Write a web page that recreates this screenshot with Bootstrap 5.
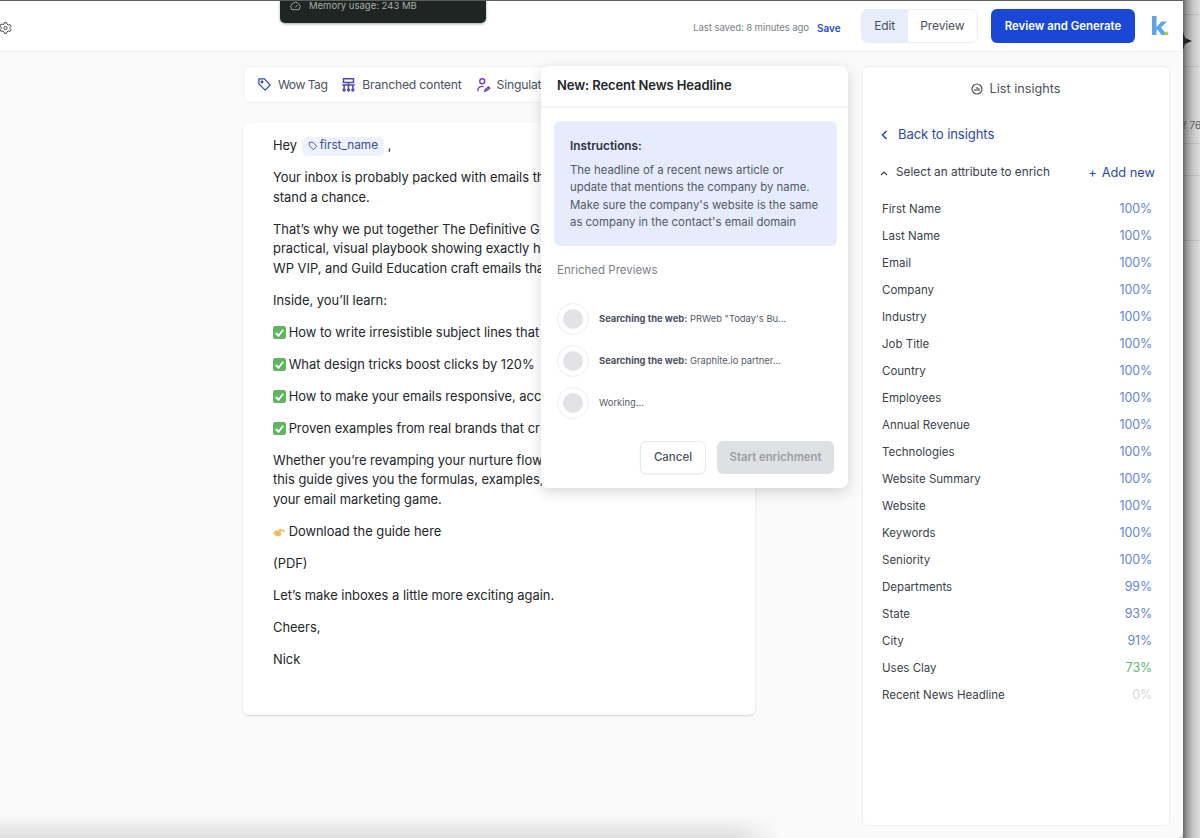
<!DOCTYPE html>
<html lang="en">
<head>
  <meta charset="UTF-8" />
  <meta name="viewport" content="width=device-width, initial-scale=1" />
  <title>Email editor</title>
  <link href="https://cdn.jsdelivr.net/npm/bootstrap@5.3.0/dist/css/bootstrap.min.css" rel="stylesheet">
  <style>
    html, body { height: 100%; overflow: hidden; }
    body {
      background: #d8d8d8;
      font-family: "Inter", "Liberation Sans", sans-serif;
      color: #1c1f26;
    }
    .app-window {
      position: relative;
      width: 1183px;
      height: 838px;
      background: #fafafa;
      border-top: 1px solid #5c5c5c;
      border-bottom-right-radius: 6px;
      overflow: hidden;
    }
    .side-strip {
      position: absolute;
      left: 1183px;
      top: 0;
      width: 17px;
      height: 838px;
      background: linear-gradient(90deg, #6a6a6a 0, #9a9a9a 4px, #c6c6c6 10px, #dedede 17px);
      overflow: hidden;
      font-size: 10px;
      color: #555;
    }
    .side-strip .strip-text { position: absolute; left: 0; top: 118px; white-space: nowrap; }
    .strip-line { position: absolute; left: 0; right: 0; height: 1px; background: rgba(0,0,0,.09); }
    .strip-line:nth-child(1) { top: 14px; }
    .strip-line:nth-child(2) { top: 66px; }
    .strip-line:nth-child(3) { top: 143px; }
    .strip-line:nth-child(4) { top: 175px; }
    .strip-line:nth-child(5) { top: 240px; }
    .side-arrow { position: absolute; left: 0; top: 32px; }
    .top-bar {
      height: 51px;
      background: #fff;
      border-bottom: 1px solid #efefef;
      padding-right: 14px;
    }
    .gear-icon { left: -1px; top: 20px; }
    .saved-text { font-size: 9.6px; letter-spacing: -.1px; color: #7b7f88; margin-right: 8px; margin-top: 4px; }
    .save-link { font-size: 10px; font-weight: 600; color: #1d4ed8; text-decoration: none; margin-right: 20px; margin-top: 4px; }
    .mode-switch { border: 1px solid #ebedf0; border-radius: 6px; overflow: hidden; height: 34px; background: #fff; }
    .mode-switch span { display: flex; align-items: center; font-size: 12px; letter-spacing: -.1px; color: #4b5160; padding: 0 12.5px; }
    .mode-switch .mode-on { background: #e7edfb; }
    .btn-generate {
      background: #1a48d4;
      color: #fff;
      font-size: 11.4px;
      font-weight: 600;
      border: 0;
      border-radius: 6px;
      height: 34px;
      width: 144px;
      margin-left: 13px;
      padding: 1px 0 0;
    }
    .brand-k { margin-left: 16px; }
    .mem-tip {
      position: absolute;
      left: 280px;
      top: -1px;
      width: 206px;
      height: 23px;
      background: #1e2522;
      border-radius: 0 0 5px 5px;
      color: #a9aeab;
      font-size: 9.5px;
      padding: 0 0 11px 10px;
      z-index: 5;
      box-shadow: 0 1px 3px rgba(0,0,0,.35);
    }
    .work-area { padding: 14px 0 0 243px; }
    .editor-col { width: 512px; }
    .tool-strip {
      height: 37px;
      background: #fff;
      border: 1px solid #f1f1f1;
      border-radius: 6px;
      padding: 1px 0 0 13px;
      font-size: 12.2px;
      color: #4b5160;
      white-space: nowrap;
      overflow: hidden;
      letter-spacing: -.2px;
      gap: 14px;
    }
    .tool-item { gap: 6px; }
    .tool-tight { letter-spacing: -.55px; }
    .mail-card {
      margin-top: 20px;
      height: 592px;
      background: #fff;
      border-radius: 6px;
      box-shadow: 0 1px 2px rgba(0,0,0,.16);
      padding: 13px 30px 0;
      font-size: 12.9px;
      line-height: 19.5px;
      color: #23262b;
    }
    .mail-card p { margin: 0 0 12.5px; white-space: nowrap; }
    .mail-card svg { vertical-align: -2px; margin-right: -1px; }
    .name-chip {
      display: inline-flex;
      align-items: center;
      gap: 2px;
      background: #eef2fc;
      color: #3b4f96;
      border-radius: 5px;
      font-size: 11.8px;
      height: 19px;
      padding: 0 6px;
      margin-left: 1px;
      vertical-align: -1px;
    }
    .name-chip svg { vertical-align: 0; margin: 0; }
    .pop-panel {
      position: absolute;
      left: 541px;
      top: 65px;
      width: 307px;
      height: 422px;
      background: #fff;
      border-radius: 7px;
      box-shadow: 0 4px 14px rgba(0,0,0,.16);
      z-index: 4;
    }
    .pop-title { height: 42px; padding: 10px 16px 0; font-size: 13px; font-weight: 600; color: #23262b; border-bottom: 2px solid #f3f3f4; letter-spacing: -.1px; }
    .instr-box {
      margin: 13px 11px 0 13px;
      height: 125px;
      background: #e6ecfb;
      border-radius: 6px;
      padding: 17px 16px 0;
      font-size: 11.4px;
      line-height: 17.4px;
      color: #525866;
      white-space: nowrap;
    }
    .instr-box strong { display: block; color: #2d3340; font-weight: 600; font-size: 11.8px; margin-bottom: 7px; line-height: 17px; }
    .enrich-head { font-size: 11.5px; color: #7b7f88; margin: 16px 0 0 16px; height: 36px; }
    .step-list { padding: 0 0 0 16px; }
    .step-row { height: 42px; gap: 10px; font-size: 9.4px; color: #565c69; }
    .step-row b { font-weight: 700; color: #4b5160; }
    .step-ring { width: 32px; height: 32px; border: 1px solid #eeeeef; border-radius: 50%; flex: none; }
    .step-ring i { display: block; width: 20px; height: 20px; background: #e2e3e6; border-radius: 50%; }
    .pop-foot { margin-top: 17px; padding-right: 14px; gap: 11px; }
    .btn-cancel, .btn-start { height: 33px; font-weight: 600; border-radius: 6px; padding: 0; }
    .btn-cancel { width: 66px; font-size: 11.5px; font-weight: 500; background: #fff; border: 1px solid #e9e9eb; color: #4b5160; box-shadow: 0 1px 2px rgba(0,0,0,.06); }
    .btn-start { width: 117px; font-size: 11.3px; background: #dfe0e3; border: 0; color: #9a9da5; }
    .insight-panel {
      position: absolute;
      left: 862px;
      top: 65px;
      width: 308px;
      height: 760px;
      background: #fff;
      border: 1px solid #eeeeee;
      border-radius: 6px;
    }
    .panel-title { font-size: 12.7px; color: #4b5160; padding-top: 12px; height: 44px; gap: 6px; }
    .back-link { color: #2b4aa8; font-size: 13.1px; margin: 14px 0 0 18px; gap: 10px; height: 20px; text-decoration: none; letter-spacing: -.1px; }
    .attr-head { margin: 18px 14px 0 17px; height: 20px; font-size: 11.8px; color: #3a3f4b; }
    .attr-head .add-new { color: #2b4aa8; font-size: 12.8px; gap: 5px; }
    .attr-list { list-style: none; margin: 13px 17px 0 19px; padding: 0; }
    .attr-list li { height: 27px; font-size: 11.5px; color: #3a3f4b; }
    .attr-list li span + span { font-size: 12.4px; letter-spacing: -.1px; }
    .pct-blue { color: #6484d8; }
    .pct-green { color: #62b872; }
    .pct-none { color: #d5d7db; }
    .shadow-foot {
      position: absolute;
      left: 0;
      bottom: 0;
      width: 780px;
      height: 24px;
      background: linear-gradient(180deg, rgba(0,0,0,0), rgba(0,0,0,.11));
      -webkit-mask-image: linear-gradient(90deg, #000 94%, transparent);
      mask-image: linear-gradient(90deg, #000 94%, transparent);
      z-index: 3;
    }
  </style>
</head>
<body>

<div class="app-window">
  <div class="top-bar d-flex align-items-center justify-content-end position-relative">
    <svg class="gear-icon position-absolute" width="13" height="14" viewBox="0 0 24 24" fill="none" stroke="#444" stroke-width="1.8"><circle cx="12" cy="12" r="3"/><path d="M10 2h4l.7 3 2.6 1.5 3-.9 2 3.4-2.2 2.2v1.600l2.200 2.200-2 3.400-3-.9-2.600 1.500-.7 3h-4l-.7-3-2.600-1.500-3 .9-2-3.400 2.200-2.200v-1.600L1.700 8.000l2-3.400 3 .9L9.300 5z"/></svg>
    <span class="saved-text">Last saved: 8 minutes ago</span>
    <a class="save-link" href="#">Save</a>
    <div class="mode-switch d-flex"><span class="mode-on">Edit</span><span>Preview</span></div>
    <button class="btn btn-generate">Review and Generate</button>
    <svg class="brand-k" width="18" height="22" viewBox="0 0 18 22"><path d="M1 1h4.500v11l5-5.500h5.500l-6 6 6 7.500h-5.500l-4-5.500-1 1V20H1z" fill="#5aa7e8"/><circle cx="15.500" cy="18.500" r="2" fill="#b5d334"/></svg>
  </div>

  <div class="mem-tip d-flex align-items-center gap-2">
    <svg width="11" height="10" viewBox="0 0 24 20" fill="none" stroke="#a9aeab" stroke-width="2"><path d="M4 18a10 10 0 1 1 16 0z"/><path d="M12 13l4-5"/></svg>
    <span>Memory usage: 243 MB</span>
  </div>

  <div class="work-area">
    <div class="editor-col">
      <div class="tool-strip d-flex align-items-center">
        <span class="tool-item d-flex align-items-center">
          <svg width="15" height="15" viewBox="0 0 24 24" fill="none" stroke="#2b4aa8" stroke-width="2" stroke-linejoin="round"><path d="M3 3h9l9 10-8 8-10-10z"/><circle cx="8" cy="8" r="1.300" fill="#2b4aa8"/></svg>
          <span class="tool-tight">Wow Tag</span>
        </span>
        <span class="tool-item d-flex align-items-center">
          <svg width="15" height="16" viewBox="0 0 24 24" fill="none" stroke="#4f46b5" stroke-width="2.400"><rect x="4" y="2" width="16" height="6"/><path d="M2 12h20M5 12v6M12 8v10M19 12v6"/><circle cx="5" cy="20" r="1.500"/><circle cx="12" cy="20" r="1.500"/><circle cx="19" cy="20" r="1.500"/></svg>
          <span>Branched content</span>
        </span>
        <span class="tool-item d-flex align-items-center">
          <svg width="15" height="16" viewBox="0 0 24 24" fill="none" stroke="#7c3fc4" stroke-width="2.200"><circle cx="10" cy="6" r="4"/><path d="M3 22v-2a6 6 0 0 1 9-5"/><path d="M14 22l1-3 5-4 2 2-5 4z"/></svg>
          <span>Singulate</span>
        </span>
      </div>

      <div class="mail-card">
        <p>Hey <span class="name-chip"><svg width="10" height="10" viewBox="0 0 24 24" fill="none" stroke="#3b4f96" stroke-width="2.200"><path d="M3 3h9l9 10-8 8-10-10z"/></svg>first_name</span> ,</p>
        <p>Your inbox is probably packed with emails th<br>stand a chance.</p>
        <p>That&rsquo;s why we put together The Definitive G<br>practical, visual playbook showing exactly h<br>WP VIP, and Guild Education craft emails tha</p>
        <p>Inside, you&rsquo;ll learn:</p>
        <p><svg width="13" height="13" viewBox="0 0 14 14"><rect width="14" height="14" rx="2.500" fill="#5fb561"/><path d="M3 7.500l3 3 5-6.500" fill="none" stroke="#fff" stroke-width="2"/></svg> How to write irresistible subject lines that</p>
        <p><svg width="13" height="13" viewBox="0 0 14 14"><rect width="14" height="14" rx="2.500" fill="#5fb561"/><path d="M3 7.500l3 3 5-6.500" fill="none" stroke="#fff" stroke-width="2"/></svg> What design tricks boost clicks by 120%</p>
        <p><svg width="13" height="13" viewBox="0 0 14 14"><rect width="14" height="14" rx="2.500" fill="#5fb561"/><path d="M3 7.500l3 3 5-6.500" fill="none" stroke="#fff" stroke-width="2"/></svg> How to make your emails responsive, acc</p>
        <p><svg width="13" height="13" viewBox="0 0 14 14"><rect width="14" height="14" rx="2.500" fill="#5fb561"/><path d="M3 7.500l3 3 5-6.500" fill="none" stroke="#fff" stroke-width="2"/></svg> Proven examples from real brands that cr</p>
        <p>Whether you&rsquo;re revamping your nurture flow<br>this guide gives you the formulas, examples,<br>your email marketing game.</p>
        <p><svg width="13" height="13" viewBox="0 0 14 14"><path d="M0 9l3-3h4l-1-1 1-1 6 2v1H8l1 3-2 2H4z" fill="#f2b95c"/></svg> Download the guide here</p>
        <p>(PDF)</p>
        <p>Let&rsquo;s make inboxes a little more exciting again.</p>
        <p>Cheers,</p>
        <p>Nick</p>
      </div>
    </div>
  </div>

  <div class="pop-panel">
    <div class="pop-title">New: Recent News Headline</div>
    <div class="instr-box">
      <strong>Instructions:</strong>
      The headline of a recent news article or<br>update that mentions the company by name.<br>Make sure the company's website is the same<br>as company in the contact's email domain
    </div>
    <div class="enrich-head">Enriched Previews</div>
    <div class="step-list">
      <div class="step-row d-flex align-items-center"><span class="step-ring d-flex align-items-center justify-content-center"><i></i></span><span><b>Searching the web:</b> PRWeb "Today's Bu...</span></div>
      <div class="step-row d-flex align-items-center"><span class="step-ring d-flex align-items-center justify-content-center"><i></i></span><span><b>Searching the web:</b> Graphite.io partner...</span></div>
      <div class="step-row d-flex align-items-center"><span class="step-ring d-flex align-items-center justify-content-center"><i></i></span><span>Working...</span></div>
    </div>
    <div class="pop-foot d-flex justify-content-end">
      <button class="btn btn-cancel">Cancel</button>
      <button class="btn btn-start">Start enrichment</button>
    </div>
  </div>

  <div class="insight-panel">
    <div class="panel-title d-flex justify-content-center align-items-start">
      <svg class="mt-1" width="12" height="12" viewBox="0 0 24 24" fill="none" stroke="#4b5160" stroke-width="2.400"><circle cx="12" cy="12" r="10"/><path d="M8 16v-4M12 16V8M16 16v-6"/></svg>
      <span>List insights</span>
    </div>
    <a class="back-link d-flex align-items-center" href="#">
      <svg width="7" height="10" viewBox="0 0 7 10" fill="none" stroke="#2b4aa8" stroke-width="1.500"><path d="M5.500 1L1.500 5l4 4"/></svg>
      Back to insights
    </a>
    <div class="attr-head d-flex align-items-center justify-content-between">
      <span class="d-flex align-items-center gap-2">
        <svg width="8" height="6" viewBox="0 0 8 6" fill="none" stroke="#3a3f4b" stroke-width="1.200"><path d="M1 5l3-3 3 3"/></svg>
        Select an attribute to enrich
      </span>
      <span class="add-new d-flex align-items-center"><span>+</span><span>Add new</span></span>
    </div>
    <ul class="attr-list" id="attrList"></ul>
  </div>

  <div class="shadow-foot"></div>
</div>

<div class="side-strip">
  <div class="strip-line"></div>
  <div class="strip-line"></div>
  <div class="strip-line"></div>
  <div class="strip-line"></div>
  <div class="strip-line"></div>
  <span class="strip-text">f 76</span>
  <svg class="side-arrow" width="10" height="18" viewBox="0 0 10 18"><path d="M0 0l2 6 7 3-7 3-2 6z" fill="#222"/></svg>
</div>

<script>
  const attrs = [
    ["First Name", 100], ["Last Name", 100], ["Email", 100], ["Company", 100],
    ["Industry", 100], ["Job Title", 100], ["Country", 100], ["Employees", 100],
    ["Annual Revenue", 100], ["Technologies", 100], ["Website Summary", 100],
    ["Website", 100], ["Keywords", 100], ["Seniority", 100], ["Departments", 99],
    ["State", 93], ["City", 91], ["Uses Clay", 73], ["Recent News Headline", 0]
  ];

  function pctClass(p) {
    if (p === 0) return "pct-none";
    return p < 80 ? "pct-green" : "pct-blue";
  }

  document.getElementById("attrList").innerHTML = attrs.map(([name, p]) =>
    `<li class="d-flex align-items-center justify-content-between"><span>${name}</span><span class="${pctClass(p)}">${p}%</span></li>`
  ).join("");
</script>
<script src="https://cdn.jsdelivr.net/npm/bootstrap@5.3.0/dist/js/bootstrap.bundle.min.js"></script>
</body>
</html>
